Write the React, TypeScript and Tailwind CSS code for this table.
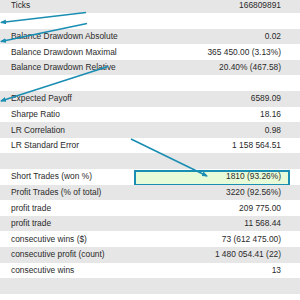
type Row = { label: string; value: string; hl?: boolean };

const rows: Row[] = [
  { label: "Ticks", value: "166809891" },
  { label: "", value: "" },
  { label: "Balance Drawdown Absolute", value: "0.02" },
  { label: "Balance Drawdown Maximal", value: "365 450.00 (3.13%)" },
  { label: "Balance Drawdown Relative", value: "20.40% (467.58)" },
  { label: "", value: "" },
  { label: "Expected Payoff", value: "6589.09" },
  { label: "Sharpe Ratio", value: "18.16" },
  { label: "LR Correlation", value: "0.98" },
  { label: "LR Standard Error", value: "1 158 564.51" },
  { label: "", value: "" },
  { label: "Short Trades (won %)", value: "1810 (93.26%)", hl: true },
  { label: "Profit Trades (% of total)", value: "3220 (92.56%)" },
  { label: "profit trade", value: "209 775.00" },
  { label: "profit trade", value: "11 568.44" },
  { label: "consecutive wins ($)", value: "73 (612 475.00)" },
  { label: "consecutive profit (count)", value: "1 480 054.41 (22)" },
  { label: "consecutive wins", value: "13" },
  { label: "", value: "" },
  { label: "", value: "" },
];

export default function App() {
  return (
    <div className="relative w-[300px] h-[300px] overflow-hidden bg-white text-[#2a2a2a] font-['Liberation_Sans',Arial,sans-serif] text-[8.4px]">
      <div className="flex flex-col -mt-[2.6px]">
        {rows.map((r, i) => (
          <div
            key={i}
            className={`relative flex items-center justify-between h-[15.6px] pl-[11px] pr-[19px] ${i % 2 === 0 ? "bg-[#e6e6e6]" : "bg-white"}`}
          >
            {r.hl && (
              <div className="absolute left-[134px] top-[1.5px] w-[156px] h-[16px] border-2 border-[#1a8db3] bg-[#e8fbd9]" />
            )}
            <span className="relative whitespace-nowrap">{r.label}</span>
            <span className="relative whitespace-nowrap">{r.value}</span>
          </div>
        ))}
      </div>

      <svg className="absolute inset-0 pointer-events-none" width="300" height="300" viewBox="0 0 300 300">
        <defs>
          <marker id="ah" markerWidth="6" markerHeight="5" refX="5" refY="2.5" orient="auto" markerUnits="userSpaceOnUse">
            <path d="M0,0 L6,2.5 L0,5 Z" fill="#1a8db3" />
          </marker>
        </defs>
        <g stroke="#1a8db3" strokeWidth="1.6" fill="none">
          <line x1="86" y1="12.5" x2="1" y2="22.5" markerEnd="url(#ah)" />
          <line x1="87" y1="23.5" x2="1" y2="41.5" markerEnd="url(#ah)" />
          <line x1="108" y1="66.5" x2="1" y2="101" markerEnd="url(#ah)" />
          <line x1="131" y1="139" x2="207" y2="176" markerEnd="url(#ah)" />
        </g>
      </svg>
    </div>
  );
}
